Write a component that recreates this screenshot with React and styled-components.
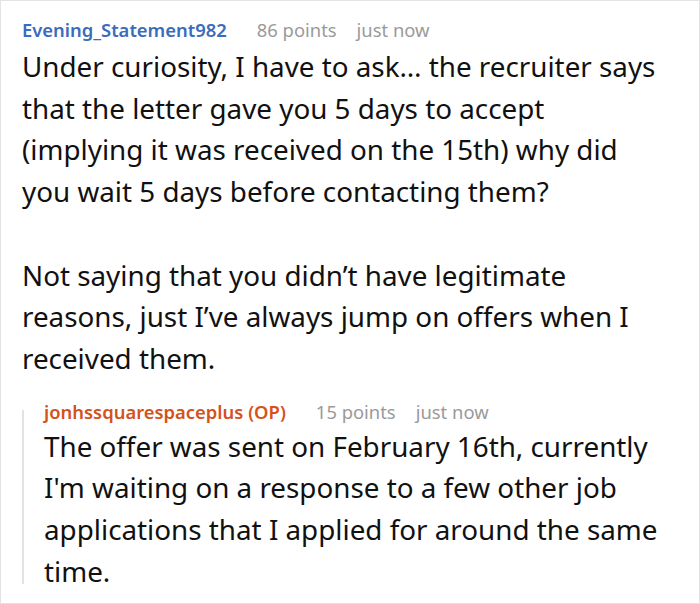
import React from "react";
import styled, { createGlobalStyle } from "styled-components";

const GlobalStyle = createGlobalStyle`
    html, body {
        margin: 0;
        padding: 0;
        background: #ffffff;
    }
    * {
        box-sizing: border-box;
    }
`;

const Frame = styled.div`
    width: 700px;
    height: 604px;
    border: 1px solid #e3e3e3;
    padding: 17px 36px 0 21px;
    background: #ffffff;
    overflow: hidden;
    font-family: "Noto Sans", "Open Sans", sans-serif;
`;

const Header = styled.div`
    display: flex;
    align-items: baseline;
    height: 24px;
    line-height: 24px;
    font-size: 18.4px;
    white-space: nowrap;
`;

const Author = styled.span`
    font-weight: 600;
    color: ${(p) => (p.$op ? "#d4521b" : "#3a6cbd")};
    margin-right: 30px;
`;

const Meta = styled.span`
    color: #9a9a9a;
    margin-right: 20px;
`;

const Body = styled.div`
    margin-top: ${(p) => (p.$reply ? "2px" : "4px")};
    font-size: 27.8px;
    line-height: 41.7px;
    color: #111111;

    p {
        margin: 0 0 41.7px 0;
    }
    p:last-child {
        margin-bottom: 0;
    }
`;

const Reply = styled.div`
    position: relative;
    margin-top: 20px;
    padding-left: 22px;

    &::before {
        content: "";
        position: absolute;
        left: 0;
        top: 10px;
        bottom: 8px;
        width: 2px;
        background: #e2e2e2;
    }
`;

const Comment = ({ author, op, points, children, reply }) => (
    <>
        <Header>
            <Author $op={op}>{author}</Author>
            <Meta>{points} points</Meta>
            <Meta>just now</Meta>
        </Header>
        <Body $reply={reply}>{children}</Body>
    </>
);

export default function App() {
    return (
        <>
            <GlobalStyle />
            <Frame>
                <Comment author="Evening_Statement982" points={86}>
                    <p>
                        Under curiosity, I have to ask… the recruiter says that the letter gave you 5 days to accept
                        (implying it was received on the 15th) why did you wait 5 days before contacting them?
                    </p>
                    <p>
                        Not saying that you didn’t have legitimate reasons, just I’ve always jump on offers when I
                        received them.
                    </p>
                </Comment>
                <Reply>
                    <Comment author="jonhssquarespaceplus (OP)" op points={15} reply>
                        <p>
                            The offer was sent on February 16th, currently I'm waiting on a response to a few other
                            job applications that I applied for around the same time.
                        </p>
                    </Comment>
                </Reply>
            </Frame>
        </>
    );
}
